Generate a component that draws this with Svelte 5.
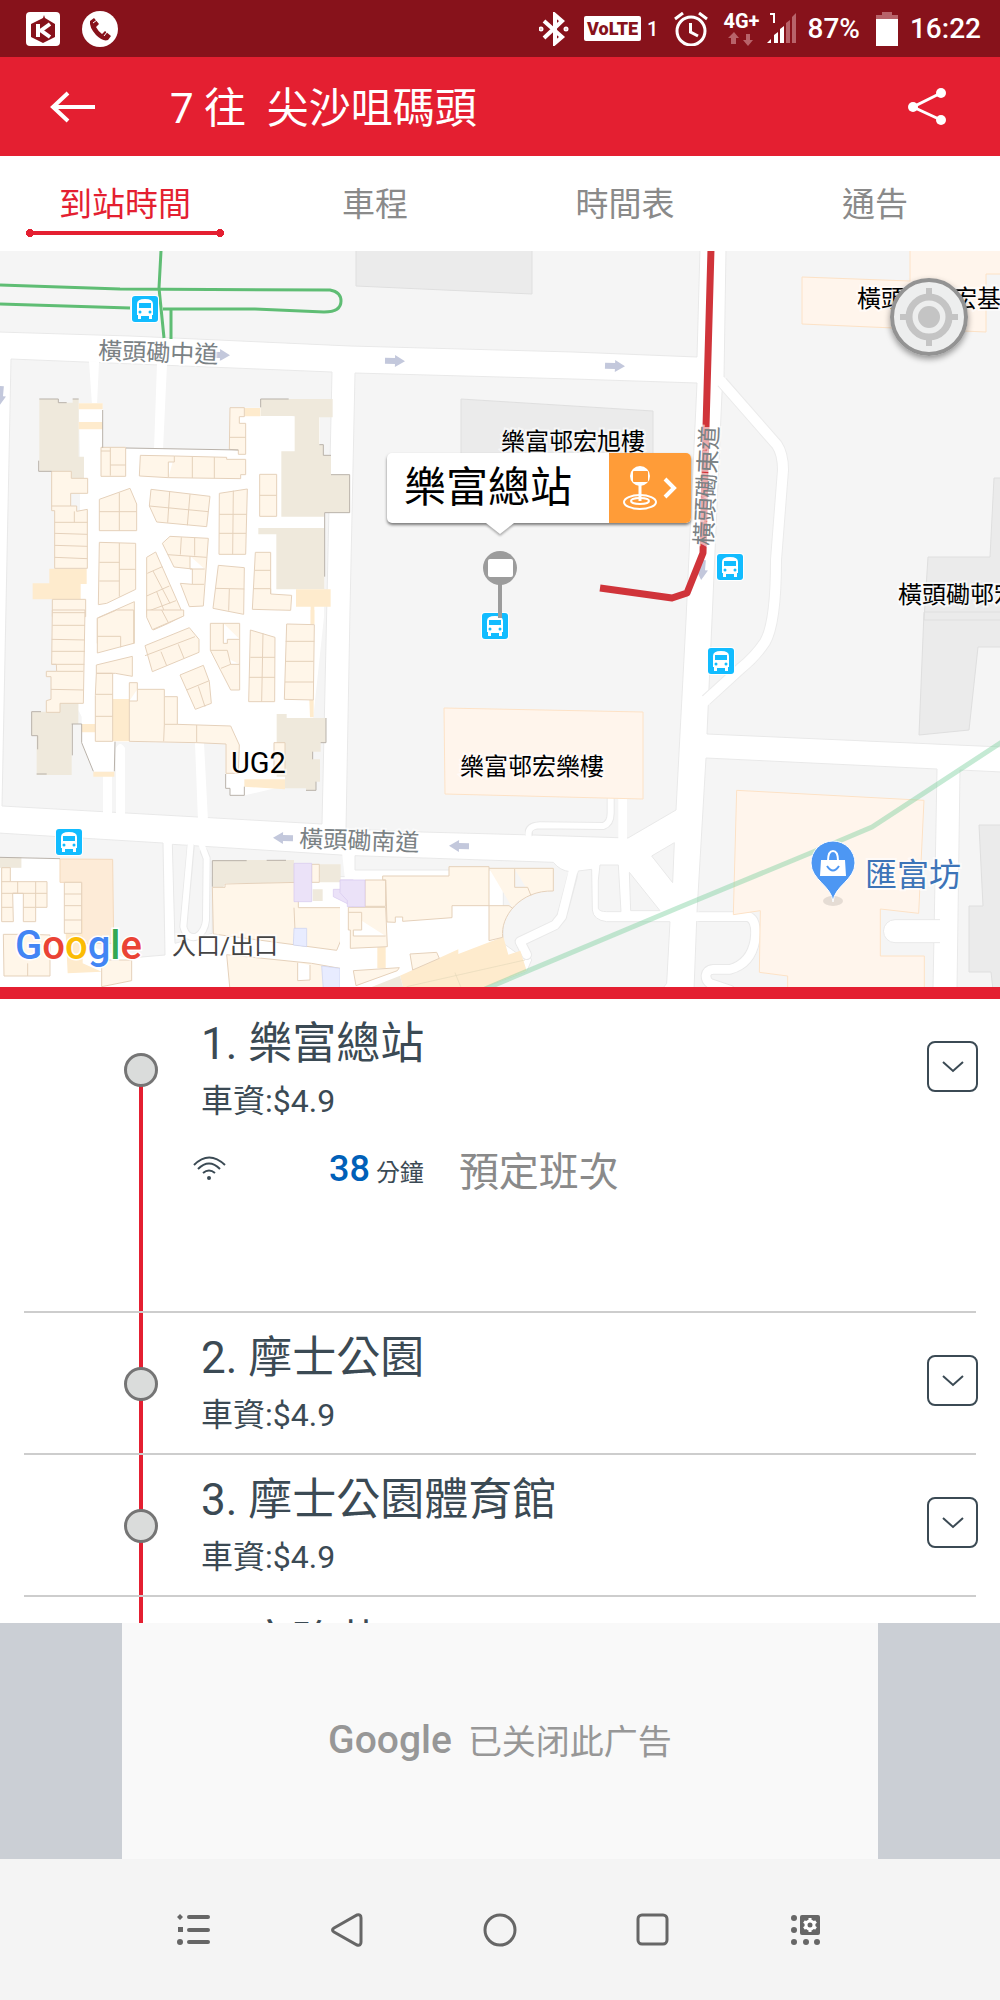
<script lang="ts">
	interface Stop {
		name: string;
		fare: string;
		eta?: { minutes: number; note: string };
	}

	const tabs = ['到站時間', '車程', '時間表', '通告'];
	let activeTab = $state(0);

	const stops: Stop[] = [
		{ name: '樂富總站', fare: '4.9', eta: { minutes: 38, note: '預定班次' } },
		{ name: '摩士公園', fare: '4.9' },
		{ name: '摩士公園體育館', fare: '4.9' },
		{ name: '富強苑', fare: '4.9' }
	];

	const busStops = [
		[132, 296],
		[56, 829],
		[482, 613],
		[717, 554],
		[708, 648]
	];

	// x, y, rotation
	const arrows = [
		[220, 355, 1],
		[395, 361, 1],
		[615, 366, 2],
		[283, 838, 181],
		[459, 846, 181],
		[702, 570, 95],
		[0, 396, 95]
	];

	const googleLetters = [
		['G', '#4285f4'],
		['o', '#ea4335'],
		['o', '#fbbc05'],
		['g', '#4285f4'],
		['l', '#34a853'],
		['e', '#ea4335']
	];
</script>

<div class="app">
	<div class="status">
		<svg class="status-icon" width="34" height="34" viewBox="0 0 34 34">
			<rect width="34" height="34" rx="4" fill="#fff" />
			<path d="M17 6L18 3 19 6 29 12V25L17 31 5 25V12Z" fill="#87121b" />
			<path d="M12 12V25M24 12L15 18.500 24 25" fill="none" stroke="#fff" stroke-width="4" />
		</svg>
		<svg class="status-icon phone" width="36" height="36" viewBox="0 0 36 36">
			<circle cx="18" cy="18" r="18" fill="#fff" />
			<path d="M8 10L12 7 17 13 14 16Q16 20 20 23L23 20 29 25 26 29Q21 31 14 24 7 16 8 10Z" fill="#87121b" />
			<path d="M11 12L15 9M22 25L25 21" stroke="#fff" />
		</svg>
		<span class="grow"></span>
		<svg width="30" height="34" viewBox="0 0 30 34" fill="none" stroke="#fff" stroke-width="4">
			<path d="M5 9L23 25 16 31V3L23 9 5 26" />
			<circle cx="2" cy="17" r="1" stroke-width="3" /><circle cx="27" cy="17" r="1" stroke-width="3" />
		</svg>
		<span class="volte">VoLTE</span>
		<span class="sim">1</span>
		<svg class="alarm" width="34" height="34" viewBox="0 0 34 34" fill="none" stroke="#fff" stroke-width="3">
			<circle cx="17" cy="19" r="14" />
			<path d="M16.500 11V20L24 24M1 7L9 1M33 7L25 1" />
		</svg>
		<div class="network">
			<span>4G+</span>
			<svg width="26" height="14" viewBox="0 0 26 14" fill="#b8636a">
				<path d="M6 0L11 6H8V12H3V6H0ZM20 14L15 8H18V2H22V8H25Z" />
			</svg>
		</div>
		<svg class="signal" width="30" height="34" viewBox="0 0 30 34">
			<path d="M3 2H7V11" fill="none" stroke="#fff" stroke-width="2" />
			<path d="M0 31L4 27V31ZM7 31V23L11 20V31ZM13 31V17L17 14V31Z" fill="#fff" />
			<path d="M19 31V11L23 8V31ZM25 31V5L29 1V31Z" fill="#b8636a" />
		</svg>
		<span class="percent">87%</span>
		<svg class="battery" width="22" height="34" viewBox="0 0 22 34">
			<path d="M0 7V3H6V0H16V3H22V7Z" fill="#b8636a" />
			<path d="M0 7H22V34H0Z" fill="#fff" />
		</svg>
		<span>16:22</span>
	</div>

	<header>
		<button type="button" class="bar-btn" aria-label="Back">
			<svg width="46" height="32" viewBox="0 0 46 32" fill="none" stroke="#fff" stroke-width="4">
				<path d="M45 16H3M18 2L3 16 18 30" />
			</svg>
		</button>
		<h1>7 往&nbsp; 尖沙咀碼頭</h1>
		<button type="button" class="bar-btn" aria-label="Share">
			<svg width="38" height="38" viewBox="0 0 38 38" fill="#fff">
				<path d="M33 5L5 19 33 32" fill="none" stroke="#fff" stroke-width="3" />
				<circle cx="5" cy="19" r="5" /><circle cx="33" cy="5" r="5" /><circle cx="33" cy="32" r="5" />
			</svg>
		</button>
	</header>

	<nav class="tabs">
		{#each tabs as tab, i}
			<button type="button" class="tab" class:active={activeTab === i} onclick={() => (activeTab = i)}>{tab}</button>
		{/each}
	</nav>

	<div class="map">
		<svg class="canvas" viewBox="0 251 1000 736">
			<defs>
				<symbol id="bus" viewBox="0 0 28 28">
					<rect width="28" height="28" rx="4" fill="#fff" />
					<rect x="1" y="1" width="26" height="26" rx="3" fill="#12bcff" />
					<path d="M6 9Q6 4 14 4T22 9V20H21V24H18V21H10V24H7V20H6Z" fill="#fff" />
					<path d="M8 8H20V13H8Z" fill="#12bcff" />
					<circle cx="9" cy="17" r="1.500" fill="#12bcff" /><circle cx="19" cy="17" r="1.500" fill="#12bcff" />
				</symbol>
			</defs>

			<rect y="251" width="1000" height="736" fill="#fff" />

			<!-- city blocks -->
			<g class="land">
				<path d="M-2 249H700L697 357 573 352 350 346 130 336-2 332Z" />
				<path d="M11 359L332 372 322 824 2 806Z" />
				<path d="M355 373L573 379 697 383 686 620 676 810 628 838 533 835 422 832 346 829 350 610Z" />
				<path d="M726 249L724 378 722 393 712 620 707 734 1002 747V249Z" />
				<path d="M706 758L937 769 933 990H694L697 912Z" />
				<path d="M960 770L1002 772V990H957Z" />
				<path d="M-2 833L163 843 165 955 130 958-2 961Z" />
			</g>
			<g transform="translate(0 610) scale(.33333)" class="land wide">
				<path d="M517 703L1038 736V800H637V970L525 1000Z" />
			</g>
			<g transform="translate(340 610) scale(.33333)" class="land wide">
				<path d="M45 737L640 757Q660 782 690 785L655 920 640 935 525 990 545 1040 490 1000V780H45Z" />
				<path d="M715 783L755 778 757 900Q760 930 800 935L990 935 980 1120 970 1133H430L560 1085 575 1050 545 1000 650 955 680 910Z" />
				<path d="M780 765H835L843 905H800Q778 905 775 895V810Z" />
				<path d="M868 787L960 902H872ZM935 738L1003 698 998 818Z" />
			</g>

			<!-- minor roads -->
			<g class="casing"><path d="M722 382L777 445Q783 454 783 470L776 560C776 600 772 630 765 642Q755 657 740 669L706 700" /></g>
			<g class="street"><path d="M720 380L777 445Q783 454 783 470L776 560C776 600 772 630 765 642Q755 657 740 669L704 702" /></g>
			<g class="drive">
				<path d="M89 361L99 362 97 405H92ZM157 363L167 364 163 450H154ZM103 775H112V814H103ZM116 748Q120 740 125 748V815H116ZM195 743H204L208 821H198ZM342 852H354V880H345Z" />
			</g>
			<g transform="translate(0 610) scale(.33333)">
				<path class="lane-casing" d="M572 712L550 950Q560 988 590 980 615 965 618 930L620 745 612 725" />
				<path class="lane" d="M572 702L550 950Q560 988 590 980 615 965 618 930L620 745 605 705" />
			</g>
			<g transform="translate(340 610) scale(.33333)">
				<path class="lane-casing" d="M567 670C564 655 574 648 600 646L790 648Q812 640 812 610V568" />
				<path class="lane" d="M568 690C560 660 570 648 600 646L790 648Q812 640 812 610V568" />
				<path class="lane broad" d="M848 568V690" />
				<path class="lane-casing broad" d="M697 800L665 920 645 945 540 995 560 1034" />
				<path class="lane broad" d="M700 780L665 920 645 945 540 995 560 1034" />
			</g>
			<g transform="translate(680 610) scale(.33333)">
				<path class="lane-casing broad" d="M60 920H205Q232 930 225 990C215 1050 180 1070 150 1078H100C70 1080 75 1110 90 1120L150 1140" />
				<path class="lane broad" d="M50 920H205Q232 930 225 990C215 1050 180 1070 150 1078H100C70 1080 75 1110 90 1120L150 1140" />
				<path d="M780 929H645A34 34 0 0 0 645 998H780" fill="#fff" stroke="#e9e9e9" stroke-width="3" />
			</g>

			<!-- estate buildings -->
			<g class="estate">
				<path d="M356 249H532V294L356 286ZM461 399L653 411V460H461ZM994 478H1002V620H924L928 557 990 557ZM924 612H1002V647H978L969 730 919 735ZM979 825H1002V990H993L991 972H969V906H983Z" />
			</g>
			<g class="block">
				<path d="M802 277L910 281V249H1002V274H986V332L802 324ZM444 708L643 712V799L445 794Z" />
			</g>
			<g transform="translate(680 610) scale(.33333)" class="block wide">
				<path d="M170 541L732 571 716 910 601 897V1038H733V1140H323V1098L238 1087 241 902 160 914Z" />
			</g>

			<!-- shopping centre, north -->
			<g transform="translate(0 250) scale(.33333)">
				<path
					class="mall"
					d="M236 460H308V593L378 596 690 599V473H780L885 500H960V600L975 790 972 1100 940 1400 930 1590 735 1636H690V1615H677V1480L345 1475V1565H280L245 1480V1400L235 1380 240 1100V600Z"
				/>
				<path class="core" d="M118 447H175V458H218V447H236V620H252V685H214V664H118ZM782 447H998V502H958V584H970V616H993V674H1050V788H972V800H844V604H884V498H782ZM775 834H973V1018H829V853H775Z" />
				<path class="hall" d="M236 460H308V478H236ZM236 516H308V538H236ZM733 474H781V499H733ZM148 956H260V1002H148ZM98 1000H242V1048H98ZM888 1018H992V1070H888ZM932 1070H943V1122H932Z" />
				<path
					class="shop"
					d="M303 592H377V679H303ZM303 603H331V677M331 645H377M331 603V592M421 616L523 618 680 622V628H737V674H722V686L505 683 418 678ZM523 618V636H505V683M577 619V684M643 621V685M690 473H733V500H718V520H737V613H715V600L688 598ZM690 562H737M155 664H214V685H263V730H212V768H230V784L262 778V955H164V782H155ZM155 768H212M223 784V817M164 817H262M164 850L262 853M164 886L262 889M164 922L262 926M298 748L390 715 410 762V842H298ZM358 728V842M298 785H410M453 718L630 739 620 830 470 816 448 768ZM509 726L503 818M570 733L562 826M448 768L625 785M658 730L742 717 737 913H657ZM700 722L698 913M658 793H740M657 850H738M779 673H830V799H779ZM779 736H830M298 877L407 880V1018L320 1060 295 1064ZM358 879V1040M298 937H358M358 958H407M298 993H358M510 859L625 865 610 1068 568 1070 541 1000 577 1003 577 957 522 951 487 880ZM544 862L541 914M584 864V917M503 914L620 922M570 918V957H614M577 1003H612M440 922L467 906 551 1097 505 1120 460 1140 440 1090ZM442 970L487 950M459 963L510 1060M440 1038L508 1008M440 1085L528 1052M470 1025L505 1115M655 946L733 953 731 1093 639 1075ZM647 1015L733 1017M688 1017L686 1082M766 907H812V1032L875 1036 872 1081 757 1078ZM764 961H812M760 1016H812V1032M157 1048H257V1100H157ZM157 1088H257M292 1104L403 1055V1180H292Z"
				/>
				<path class="wall" d="M118 447H175V458H200M218 447H236M116 632V664H155M308 480V593M378 594L715 600M782 472V447H866M958 584H970V616H993M993 674H1049V788H974V980" />
			</g>

			<!-- shopping centre, south -->
			<g transform="translate(0 610) scale(.33333)">
				<path class="mall" d="M0 773H64V742L180 747V817L245 817V1000L395 1050 640 1035 1000 1060V1140H0Z" />
				<path class="core" d="M95 305H180V280H235V342H215V495H110V377H95ZM830 312H860V324H978V398H962V425H938V448H960V515H948V541H918V535H855V500H830ZM0 742H64V773H0ZM637 750H882V820H675L670 832H637ZM960 763H1022V817H960ZM938 838H968V873H938Z" />
				<path class="annex" d="M180 747L338 748 341 1000H245V817H180Z" />
				<path class="hall" d="M338 267H388V394H338ZM245 342H286V367H245ZM280 485H343V500H280ZM733 508H855V538L733 530ZM932 0H943V42H932ZM928 270H941V322H930ZM195 930H248V1060L305 1085 203 1090Z" />
				<path
					class="shop"
					d="M157 0H255L250 280H180V307H139V272L153 268V200H139V184H170L169 163H155ZM157 8H255M157 46H255M155 88L255 90M155 124H255M155 163H253M170 184H250M153 238L250 240M292 25L350 0H401V100L292 129ZM292 79H362V112M289 165L397 139V199L346 190H289ZM289 190H338V394H286V256ZM286 253H338M286 319H338M388 218H412V238H493V260H532V343L692 348 718 405 715 490H678V402L590 398 388 394ZM388 273H412V238M493 260V343L491 394M493 343H532M590 345V398M440 0L551 0V18L457 59 440 22ZM485 0L505 38M435 107L568 53 597 88V127L457 185ZM435 137L585 80M483 125L500 167M535 103L552 145M540 195L610 166 628 215 634 280 586 298ZM560 240L628 212M595 229L615 290M631 40H719V240H692L631 121ZM670 40V100H682V88H719M631 121H682L692 163H719M663 175L692 163M751 60L825 82 824 275H746ZM789 70L785 275M751 142H825M747 202H825M860 42L943 44 940 270 853 268ZM857 94H943M855 154H941M855 216H941M822 398H855V490H822Z"
				/>
				<path
					class="shop"
					d="M5 773H31V815H141V892H107V935H70V850H38L40 935H5ZM5 815H31M53 815V850H38M107 815V892M5 850H141M5 892H38M70 892H107M10 973H85L150 975V1098H12ZM83 1060V1098M193 817H245V970H193ZM193 852H245M193 887H245M193 930H245M305 1050H395V1112L305 1130ZM637 832H675V822L895 817V893H1025V985L1010 1021 640 972ZM882 893L885 960M935 763H958V817H935ZM680 1034L935 1060 1020 1075V1140H690ZM893 1058V1112L930 1110V1065"
				/>
				<path class="violet" d="M882 760H935V875H882ZM1022 810H1060V890L1000 860V838H1022Z" />
				<path fill="#e8ecff" stroke="#c9d0ef" stroke-width="2" d="M882 955H920V1010L880 1005ZM965 1068L1020 1075V1140H970Z" />
				<path class="wall" d="M123 305H95V377H113V418M110 492H140M215 342H245V398L280 484M217 342V436M345 395L343 484M677 492V535H690V556H733V530M978 324V398H962M938 425V448M948 515V541H918M0 742L180 746M637 830V752H740M800 751H858" />
			</g>
			<g transform="translate(340 610) scale(.33333)">
				<path class="mall" d="M75 810H140L445 888V990L180 1095 90 1140H0V890H75Z" />
				<path class="hall" d="M180 1097L355 1018V1032L490 980 505 1034 541 1022 560 1082 430 1133H190ZM112 1010H137V1075H112Z" />
				<path class="core" d="M90 1133L180 1097 190 1133Z" />
				<path
					class="shop"
					d="M128 798H327V770H447V775H640V843C540 840 480 920 488 982L447 992V887H336V923L188 934V921H166V937L141 936 137 810H128ZM447 775V887H507L518 895M524 777V832H563L573 857M75 810H137V889H75ZM25 892H137L142 1010 31 1015V960H25ZM25 907H65V960H40V978H137M210 1032L290 1027 298 1045 218 1080ZM40 1082L178 1073 172 1082 48 1127Z"
				/>
				<path class="violet" d="M0 810H75V890H22V872L0 848Z" />
				<path d="M200 1130L555 1050M345 1088L362 1130" fill="none" stroke="#e6d9bb" stroke-width="2" />
			</g>

			<!-- railway and paths -->
			<path d="M1002 742L872 827 813 852 680 907 485 989" fill="none" stroke="#7fd1a0" stroke-opacity=".45" stroke-width="5" />
			<g fill="none" stroke="#5fbd74" stroke-width="3">
				<path d="M0 285L120 289 330 290Q341 292 341 301 341 312 324 312L255 309H163M0 304L130 308M161 251L159 288 164 338M171 309V339" />
			</g>

			{#each arrows as [x, y, angle]}
				<path d="M-10-3H0V-6L10 0 0 6V3H-10Z" fill="#c3c8dc" transform="translate({x} {y}) rotate({angle})" />
			{/each}

			<path class="route" d="M711 249L706 427 703 553 687 593 672 598 600 588" />

			{#each busStops as [x, y]}
				<use href="#bus" x={x - 1} y={y - 1} width="28" height="28" />
			{/each}

			<g class="road-name">
				<text transform="translate(98 359) rotate(2)">橫頭磡中道</text>
				<text transform="translate(299 847) rotate(2)">橫頭磡南道</text>
				<text transform="translate(712 546) rotate(-87)">橫頭磡東道</text>
			</g>
			<g class="place">
				<text x="501" y="450">樂富邨宏旭樓</text>
				<text x="460" y="775">樂富邨宏樂樓</text>
				<text x="857" y="307">橫頭磡邨宏基</text>
				<text x="898" y="603">橫頭磡邨宏</text>
				<text x="172" y="954" fill="#444">入口/出口</text>
				<text x="231" y="773" font-size="29">UG2</text>
			</g>
			<text class="venue" x="865" y="886">匯富坊</text>

			<ellipse cx="833" cy="901" rx="10" ry="5" fill="#000" opacity=".1" />
			<path d="M833 902C832 886 811 880 811 863A22 22 0 0 1 855 863C855 880 834 886 833 902Z" fill="#4d97f3" stroke="#fff" />
			<path d="M821 860H845L846 876H820Z" fill="#fff" />
			<path d="M828 861Q828 851 833 851T838 861" fill="none" stroke="#fff" stroke-width="2" />
			<path d="M827 866Q833 875 839 866" fill="none" stroke="#4d97f3" stroke-width="2" />

			<text class="logo" x="15" y="959">{#each googleLetters as [letter, fill]}<tspan {fill}>{letter}</tspan>{/each}</text>

			<path d="M500 584V618" stroke="#9c9c9c" stroke-width="4" />
			<circle cx="500" cy="568" r="17" fill="#9c9c9c" />
			<rect x="488" y="559" width="25" height="18" rx="2" fill="#fff" />
		</svg>

		<button type="button" class="callout">
			<span class="callout-name">樂富總站</span>
			<span class="callout-go">
				<svg width="54" height="46" viewBox="0 0 54 46" fill="none" stroke="#fff">
					<ellipse cx="17" cy="37" rx="16" ry="7" stroke-width="2" />
					<ellipse cx="17" cy="36" rx="9" ry="3" stroke-width="2" />
					<path d="M17 20V36" stroke-width="3" />
					<circle cx="17" cy="11" r="10" fill="#fff" stroke="none" />
					<rect x="10" y="6" width="15" height="11" rx="1" fill="#ff9c38" stroke="none" />
					<path d="M42 14L51 23 42 32" stroke-width="4" />
				</svg>
			</span>
		</button>

		<button type="button" class="locate" aria-label="My location">
			<svg viewBox="0 0 78 78">
				<circle cx="39" cy="39" r="37" fill="#edeeee" stroke="#939393" stroke-width="4" />
				<circle cx="39" cy="39" r="20" fill="none" stroke="#c4c4c4" stroke-width="7" />
				<circle cx="39" cy="39" r="11" fill="#c4c4c4" />
				<path d="M39 10V18M39 60V68M10 39H18M60 39H68" stroke="#c4c4c4" stroke-width="6" />
			</svg>
		</button>
	</div>

	<ol class="stops">
		{#each stops as stop, i}
			<li class="stop" class:first={i === 0}>
				<span class="track"><span class="dot"></span></span>
				<div class="info">
					<h2>{i + 1}. {stop.name}</h2>
					<p class="fare">車資:${stop.fare}</p>
					{#if stop.eta}
						<div class="eta">
							<svg width="33" height="26" viewBox="0 0 33 26" fill="none" stroke="#3b4a54" stroke-width="2">
								<path d="M1 9Q16 -6 32 9M5 13Q16 2 27 13M10 17Q16 12 22 17" />
								<circle cx="16" cy="22" r="1" />
							</svg>
							<span class="minutes"><b>{stop.eta.minutes}</b> 分鐘</span>
							<span class="note">{stop.eta.note}</span>
						</div>
					{/if}
				</div>
				<button type="button" class="expand" aria-label="展開 {stop.name}">
					<svg width="22" height="12" viewBox="0 0 22 12" fill="none" stroke="#3b4a54" stroke-width="2">
						<path d="M1 1L11 10 21 1" />
					</svg>
				</button>
			</li>
		{/each}
	</ol>

	<div class="ad">
		<div class="ad-body">
			<span class="ad-logo">Google</span>
			<span>已关闭此广告</span>
		</div>
	</div>

	<nav class="softkeys">
		<button type="button" aria-label="Menu">
			<svg width="34" height="34" viewBox="0 0 34 34" fill="#666">
				<path d="M3 1L6 4 3 7 0 4ZM1 14H6V19H1Z" />
				<circle cx="3" cy="29" r="3" />
				<path d="M12 4H31M12 17H31M12 29H31" stroke="#666" stroke-width="4" stroke-linecap="round" />
			</svg>
		</button>
		<button type="button" aria-label="Back">
			<svg width="34" height="34" viewBox="0 0 34 34" fill="none" stroke="#666" stroke-width="3">
				<path d="M27 2Q31 1 31 5V29Q31 33 27 32L4 19Q1 17 4 15Z" />
			</svg>
		</button>
		<button type="button" aria-label="Home">
			<svg width="34" height="34" viewBox="0 0 34 34" fill="none" stroke="#666" stroke-width="3">
				<circle cx="17" cy="17" r="15" />
			</svg>
		</button>
		<button type="button" aria-label="Recent apps">
			<svg width="34" height="34" viewBox="0 0 34 34" fill="none" stroke="#666" stroke-width="3">
				<rect x="2" y="2" width="29" height="29" rx="4" />
			</svg>
		</button>
		<button type="button" aria-label="Settings">
			<svg width="30" height="30" viewBox="0 0 30 30" fill="#666">
				<rect x="9" width="20" height="20" rx="2" />
				<circle cx="3" cy="3" r="3" /><circle cx="3" cy="15" r="3" /><circle cx="3" cy="27" r="3" />
				<circle cx="15" cy="27" r="3" /><circle cx="26" cy="27" r="3" />
				<circle cx="19" cy="10" r="4" fill="none" stroke="#fff" stroke-width="3" />
				<path d="M19 3V6M19 14V17M13 6.500L15 8M23 12L25 13.500M13 13.500L15 12M23 8L25 6.500" stroke="#fff" stroke-width="3" />
			</svg>
		</button>
	</nav>
</div>

<style>
	:global(body) {
		margin: 0;
	}

	.app {
		display: flex;
		flex-direction: column;
		height: 100vh;
		background: #fff;
		color: #3b4a54;
		font-family: Roboto, 'Noto Sans CJK TC', sans-serif;
	}

	button {
		padding: 0;
		border: 0;
		background: none;
		color: inherit;
		font: inherit;
		cursor: pointer;
	}

	svg {
		display: block;
		flex: none;
	}

	.status {
		display: flex;
		flex: none;
		align-items: center;
		height: 57px;
		padding: 0 19px 0 26px;
		background: #87121b;
		color: #fff;
		font-size: 28px;
		font-weight: 500;
	}

	.phone {
		margin-left: 22px;
	}

	.grow {
		flex: 1;
	}

	.volte {
		margin-left: 15px;
		padding: 0 3px;
		border-radius: 2px;
		background: #fff;
		color: #87121b;
		font-size: 18px;
		font-weight: 900;
		line-height: 25px;
	}

	.sim {
		margin-left: 6px;
		font-size: 20px;
	}

	.alarm {
		margin-left: 16px;
	}

	.network {
		display: flex;
		flex-direction: column;
		align-items: center;
		gap: 2px;
		margin-left: 15px;
		font-size: 20px;
		font-weight: 700;
		line-height: 18px;
	}

	.signal {
		margin-left: 7px;
	}

	.percent {
		margin-left: 11px;
	}

	.battery {
		margin: 0 12px 0 16px;
	}

	header {
		display: flex;
		flex: none;
		align-items: center;
		height: 99px;
		padding: 0 54px 0 50px;
		background: #e41f31;
		color: #fff;
	}

	h1 {
		flex: 1;
		margin: 0 0 0 74px;
		padding-bottom: 4px;
		font-size: 42px;
		font-weight: 400;
	}

	.tabs {
		display: flex;
		flex: none;
		height: 95px;
	}

	.tab {
		position: relative;
		flex: 1;
		padding-bottom: 4px;
		color: #8a8a8a;
		font-size: 33px;
	}

	.tab.active {
		color: #e41f31;
	}

	.tab.active::after {
		content: '';
		position: absolute;
		right: 26px;
		bottom: 14px;
		left: 26px;
		height: 8px;
		background:
			radial-gradient(circle at 4px 4px, #e41f31 4px, transparent 4px),
			radial-gradient(circle at calc(100% - 4px) 4px, #e41f31 4px, transparent 4px),
			linear-gradient(transparent 2px, #e41f31 2px, #e41f31 6px, transparent 6px);
	}

	.map {
		position: relative;
		flex: none;
		overflow: hidden;
		border-bottom: 12px solid #e41f31;
	}

	.canvas {
		width: 100%;
		height: auto;
	}

	.land {
		fill: #f5f5f5;
		stroke: #e9e9e9;
		stroke-width: 1;
	}

	.land.wide {
		stroke-width: 3;
	}

	.casing {
		fill: none;
		stroke: #ebebeb;
		stroke-width: 12;
	}

	.street {
		fill: none;
		stroke: #fff;
		stroke-width: 10;
	}

	.drive {
		fill: #fff;
	}

	.lane,
	.lane-casing {
		fill: none;
		stroke: #fff;
		stroke-width: 18;
		stroke-linecap: round;
		stroke-linejoin: round;
	}

	.lane.broad {
		stroke-width: 26;
	}

	.lane-casing {
		stroke: #e9e9e9;
		stroke-width: 24;
	}

	.lane-casing.broad {
		stroke-width: 32;
	}

	.estate {
		fill: #ebebeb;
		stroke: #dfdfdf;
	}

	.block {
		fill: #fff5ec;
		stroke: #fde2c6;
	}

	.block.wide {
		stroke-width: 3;
	}

	.annex {
		fill: #fdebd7;
		stroke: #f3d9bd;
		stroke-width: 3;
	}

	.mall {
		fill: #fff;
	}

	.core {
		fill: #efe9dc;
	}

	.hall {
		fill: #feebcd;
	}

	.shop {
		fill: #fff6e9;
		stroke: #e5d1bb;
		stroke-width: 3;
	}

	.violet {
		fill: #ebe2f8;
		stroke: #d6c8ee;
		stroke-width: 2;
	}

	.wall {
		fill: none;
		stroke: #b9b2aa;
		stroke-width: 3;
	}

	.route {
		fill: none;
		stroke: #d0343a;
		stroke-width: 7;
		stroke-linejoin: round;
	}

	.road-name,
	.place,
	.venue {
		stroke: #fff;
		stroke-opacity: 0.6;
		stroke-width: 4;
		paint-order: stroke;
		font-size: 24px;
	}

	.road-name {
		fill: #7a8184;
	}

	.place {
		fill: #000;
	}

	.venue {
		fill: #3d74b8;
		font-size: 32px;
	}

	.logo {
		font-size: 40px;
		font-weight: 500;
		stroke: #fff;
		stroke-width: 3;
		paint-order: stroke;
	}

	.callout {
		position: absolute;
		top: 202px;
		left: 50%;
		display: flex;
		width: 304px;
		height: 70px;
		margin-left: -113px;
		border-radius: 5px;
		background: #fff;
		box-shadow: 0 2px 3px rgba(0, 0, 0, 0.5);
		color: #000;
		font-size: 42px;
	}

	.callout::after {
		content: '';
		position: absolute;
		top: 70px;
		left: 99px;
		border: 14px solid transparent;
		border-top: 11px solid #fff;
		border-bottom: 0;
		filter: drop-shadow(0 2px 1px rgba(0, 0, 0, 0.3));
	}

	.callout-name {
		flex: 1;
		padding-left: 17px;
		line-height: 70px;
		text-align: left;
	}

	.callout-go {
		display: flex;
		align-items: center;
		justify-content: center;
		width: 82px;
		height: 70px;
		border-radius: 0 5px 5px 0;
		background: #ff9c38;
	}

	.locate {
		position: absolute;
		top: 27px;
		right: 32px;
		width: 78px;
		height: 78px;
		border-radius: 50%;
		box-shadow: 0 3px 6px rgba(0, 0, 0, 0.4);
	}

	.stops {
		flex: 1;
		min-height: 0;
		margin: 0;
		padding: 0 24px;
		overflow-y: auto;
		scrollbar-width: none;
		list-style: none;
	}

	.stop {
		display: flex;
		height: 142px;
		box-sizing: border-box;
		border-bottom: 2px solid #cdcdcd;
	}

	.stop.first {
		height: 314px;
	}

	.track {
		display: flex;
		flex: none;
		justify-content: center;
		width: 34px;
		margin: 0 43px 0 100px;
		background: linear-gradient(#e41f31, #e41f31) center / 4px 100% no-repeat;
	}

	.first .track {
		background-size: 4px 240px;
		background-position: center bottom;
	}

	.dot {
		box-sizing: border-box;
		width: 34px;
		height: 34px;
		margin-top: 54px;
		border: 3px solid #757575;
		border-radius: 50%;
		background: #dadcdb;
	}

	.info {
		flex: 1;
	}

	h2 {
		margin: 17px 0 0;
		font-size: 44px;
		font-weight: 400;
		line-height: 56px;
	}

	.fare {
		margin: 8px 0 0;
		font-size: 32px;
		line-height: 42px;
	}

	.eta {
		display: flex;
		align-items: center;
		height: 60px;
		margin-top: 17px;
		margin-left: -8px;
	}

	.minutes {
		margin-left: 103px;
		font-size: 24px;
	}

	.minutes b {
		color: #0060b8;
		font-size: 36px;
		font-weight: 500;
	}

	.note {
		margin-left: 35px;
		color: #8a8a8a;
		font-size: 40px;
	}

	.expand {
		display: flex;
		flex: none;
		align-items: center;
		justify-content: center;
		width: 51px;
		height: 51px;
		margin: 42px -2px 0 0;
		border: 2px solid #3b4a54;
		border-radius: 8px;
	}

	.ad {
		display: flex;
		flex: none;
		height: 236px;
		padding: 0 122px;
		background: #cbcfd5;
	}

	.ad-body {
		display: flex;
		flex: 1;
		align-items: center;
		justify-content: center;
		gap: 16px;
		padding-bottom: 3px;
		box-sizing: border-box;
		background: #f9f9f9;
		color: #979797;
		font-family: Roboto, 'Noto Sans CJK SC', sans-serif;
		font-size: 34px;
	}

	.ad-logo {
		font-size: 39px;
		font-weight: 500;
	}

	.softkeys {
		display: flex;
		flex: none;
		align-items: center;
		height: 141px;
		padding: 0 118px;
		background: #f4f4f4;
	}

	.softkeys button {
		display: flex;
		flex: 1;
		justify-content: center;
	}
</style>
